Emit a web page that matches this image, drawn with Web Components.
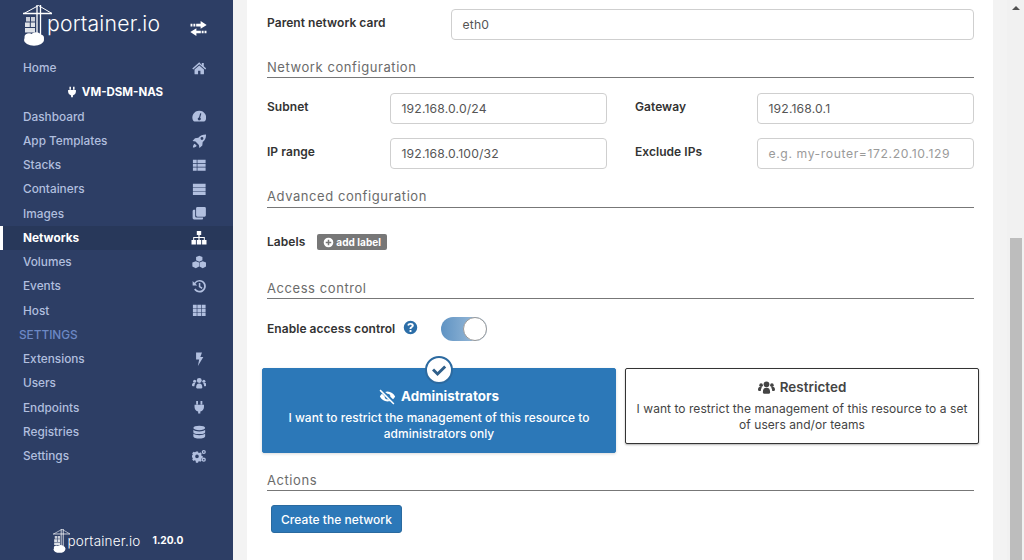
<!DOCTYPE html>
<html lang="en"><head><meta charset="utf-8"><title>Portainer</title>
<style>
html,body{margin:0;padding:0;height:560px;overflow:hidden;background:#f3f3f3;font-family:Inter,"Open Sans",sans-serif}
</style></head><body>
<app-shell>
  <side-bar slot="side"></side-bar>
  <form-panel slot="main"></form-panel>
</app-shell>
<script>
const I={
home:'<path d="M8 1.500.3 8.200l1.100 1.200L8 3.700l6.600 5.700 1.100-1.200-2.700-2.300V2.300h-2.200v2zM8 5 2.800 9.500V14a.6.6 0 0 0 .6.6h3.300v-3.800h2.600v3.800h3.300a.6.6 0 0 0 .6-.6V9.500z"/>',
plug:'<path d="M4.600 1h2v4h-2zM9.400 1h2v4h-2zM2.800 5.300h10.400V8a5.200 5.200 0 0 1-4 4.700V15H6.800v-2.300A5.200 5.200 0 0 1 2.800 8z"/>',
gauge:'<path fill-rule="evenodd" d="M8 1.800A7.500 7.500 0 0 0 1.400 13c.3.500.8.800 1.300.800h10.600c.5 0 1-.3 1.300-.8A7.500 7.500 0 0 0 8 1.800zM10.300 5 9 9.700a1.600 1.600 0 1 1-1.300-.3l1.300-4.700z"/>',
rocket:'<path d="M15.500.5c-3.700 0-6.300 1-8.500 3.700L3.300 4.600.6 7.800l3.300.6L7.600 12l.6 3.400 3.200-2.700.4-3.800C14.500 6.800 15.500 4.200 15.500.5zM11 3.400a1.600 1.600 0 1 1 0 3.200 1.600 1.600 0 0 1 0-3.200zM3 10.800c-1.200.5-2 2.300-2 4.200 1.900 0 3.700-.8 4.200-2z"/>',
list:'<path d="M1 2h4.200v3.400H1zM6 2h9v3.400H6zM1 6.300h4.200v3.400H1zM6 6.300h9v3.400H6zM1 10.600h4.200V14H1zM6 10.600h9V14H6z"/>',
server:'<path d="M1 1.800h14v3.700H1zM1 6.200h14v3.700H1zM1 10.600h14v3.700H1z"/>',
clone:'<path d="M6 1h7.800A1.500 1.500 0 0 1 15.300 2.500v7.800a1.500 1.500 0 0 1-1.500 1.500H6a1.500 1.500 0 0 1-1.500-1.500V2.500A1.500 1.500 0 0 1 6 1z"/><path d="M3.500 4.200v7.100a1.500 1.500 0 0 0 1.500 1.500h7.200v1a1 1 0 0 1-1 1H2.200A1.500 1.500 0 0 1 .7 13.300V5.700a1.500 1.500 0 0 1 1.500-1.500z"/>',
sitemap:'<path d="M5.800 1h4.400v4H8.600v2h5.200v3h1.700v4.500h-4.400V10h1.700V8H8.600v2h1.600v4.500H5.800V10h1.600V8H3.200v2h1.700v4.500H.5V10h1.700V7h5.200V5H5.800z"/>',
cubes:'<path d="M8 .7l3.500 1.500v3.700L8 7.500 4.500 5.900V2.200z"/><path d="M4.200 6.800l3.600 1.600v4.200l-3.600 1.900L.4 12.600V8.400z"/><path d="M11.800 6.800l3.800 1.600v4.200l-3.800 1.900-3.500-1.900V8.400z"/>',
history:'<path d="M8.300 1a7 7 0 1 1-6 10.600l1.600-1a5.100 5.100 0 1 0-.1-5.300l1.900 1.900H.7V2.200l1.800 1.800A7 7 0 0 1 8.300 1zM7.500 4.300h1.700v3.800l2.400 1.400-.8 1.400-3.300-2z"/>',
th:'<path d="M1 1.800h4.200v3.800H1zM5.900 1.800h4.200v3.800H5.900zM10.800 1.800H15v3.800h-4.200zM1 6.200h4.200v3.800H1zM5.900 6.200h4.200v3.800H5.900zM10.800 6.200H15v3.800h-4.200zM1 10.600h4.200v3.800H1zM5.900 10.600h4.200v3.800H5.900zM10.800 10.600H15v3.800h-4.200z"/>',
bolt:'<path d="M4.500.5H11L9.200 5.500H12.500L6.500 15.500l1.400-7.300H4.500z"/>',
users:'<circle cx="8" cy="5" r="2.700"/><circle cx="2.900" cy="5.800" r="1.700"/><circle cx="13.100" cy="5.800" r="1.700"/><path d="M4.600 12.800c0-3.200 1-4.500 3.400-4.500s3.400 1.300 3.400 4.500c0 .6-.5 1-1 1H5.600c-.5 0-1-.4-1-1zM0 10.200c0-1.600.8-2.800 2.200-2.800.7 0 1.100.2 1.500.5-.7.800-1 2-1.100 3.300H1c-.6 0-1-.4-1-1zM16 10.200c0-1.600-.8-2.800-2.200-2.800-.7 0-1.100.2-1.500.5.700.8 1 2 1.100 3.300H15c.6 0 1-.4 1-1z"/>',
db:'<ellipse cx="8" cy="3.200" rx="6.500" ry="2.500"/><path d="M1.500 5.200c1 1.300 3.800 1.900 6.500 1.900s5.500-.6 6.500-1.900v2.700C14.500 9.300 11 10 8 10S1.500 9.300 1.500 7.900zM1.500 9.400c1 1.300 3.800 1.900 6.500 1.900s5.500-.6 6.500-1.900v3C14.500 14.100 11 15 8 15s-6.500-.9-6.500-2.600z"/>',
cogs:'<path fill-rule="evenodd" d="M4.300 3.500h2.400l.3 1.300 1 .4 1.200-.7 1.600 1.600-.7 1.200.4 1 1.300.3v2.300l-1.300.3-.4 1 .7 1.200-1.600 1.600-1.200-.7-1 .4-.3 1.300H4.300L4 13.700 3 13.300l-1.200.7L.2 12.400l.7-1.200-.4-1-.5-.1V7.700l.5-.1.400-1-.7-1.200 1.600-1.600L3 4.500l1-.4zM5.500 7a2 2 0 1 0 0 4 2 2 0 0 0 0-4z" transform="translate(0 -.8)"/><path fill-rule="evenodd" d="M13 1a2.300 2.300 0 1 0 0 4.600A2.300 2.300 0 0 0 13 1zm0 1.400a.9.9 0 1 1 0 1.800.9.9 0 0 1 0-1.800zM13 9.500a2.300 2.300 0 1 0 0 4.600 2.300 2.300 0 0 0 0-4.600zm0 1.400a.9.9 0 1 1 0 1.800.9.9 0 0 1 0-1.800z"/>',
exchange:'<path d="M.5 3.500h1.800v2.500H.5zM3.200 3.500H5V6H3.200zM5.800 3.500H10V1l5.700 3.800L10 8.200V6H5.800zM15.500 10h-1.800v2.500h1.800zM12.800 10H11v2.500h1.800zM10.200 10H6V7.800L.3 11.200 6 15v-2.500h4.200z"/>',
eyeslash:'<path d="M1.500 1.500l13 13-1 1-13-13zM8 3.300c3.200 0 5.800 2 7.200 4.700-.5 1-1.200 1.900-2 2.700L10.700 8.200A2.800 2.800 0 0 0 7.800 5.300L5.800 3.700C6.500 3.500 7.200 3.300 8 3.300zM.8 8c.5-1 1.200-1.900 2-2.700l2.500 2.500a2.800 2.800 0 0 0 2.900 2.900l2 1.600c-.7.200-1.400.4-2.200.4-3.200 0-5.800-2-7.200-4.700z"/>',
check:'<path d="M1.800 8.500 3.600 6.700 6.700 9.800 12.600 3.900 14.400 5.700 6.700 13.400z"/>',
help:'<path fill-rule="evenodd" d="M8 .8a7.200 7.200 0 1 1 0 14.400A7.200 7.200 0 0 1 8 .8zM8.100 3.300c-1.800 0-3 .9-3.500 2.200l1.700.7c.3-.7.800-1.200 1.700-1.200.7 0 1.300.4 1.300 1 0 .5-.4.800-1 1.200-.8.500-1.300 1-1.300 2v.4h2v-.3c0-.4.300-.7.800-1 .9-.6 1.700-1.200 1.700-2.400 0-1.700-1.600-2.600-3.400-2.600zM7 10.700v2h2v-2z"/>',
plus:'<path fill-rule="evenodd" d="M8 1a7 7 0 1 1 0 14A7 7 0 0 1 8 1zM6.900 4v2.900H4v2.200h2.900V12h2.200V9.100H12V6.900H9.100V4z"/>'
};
const svg=(n,s,sty='')=>`<svg viewBox="0 0 16 16" width="${s}" height="${s}" fill="currentColor" style="display:block;${sty}" aria-hidden="true">${I[n]}</svg>`;
const LOGO=`<svg viewBox="0 0 30 41" width="100%" height="100%" aria-hidden="true" style="display:block"><g fill="none" stroke="#fff"><path stroke-width="1" d="M1 8.500 15.500.5 29 8.500"/><path stroke-width="1.300" d="M0 8.500H29M14 0V31M17.500 0V31"/></g><g fill="#fff"><path d="M3 12h4v4.500H3zM8 12h4v4.500H8z" opacity=".75"/><path d="M2 17.500h4.800v4.500H2zM7.800 17.500H12v4.500H7.800zM2 23h10v4.500H2z" opacity=".85"/><ellipse cx="11" cy="35" rx="10" ry="5.800"/><ellipse cx="6" cy="32" rx="4.500" ry="3.800"/><ellipse cx="13" cy="31" rx="5" ry="3.800"/><ellipse cx="17" cy="33" rx="4" ry="3.500"/></g></svg>`;

class AppShell extends HTMLElement{constructor(){super();this.attachShadow({mode:'open'}).innerHTML=`<style>
:host{display:flex;width:1024px;height:560px;overflow:hidden}
.main{flex:1;display:flex;min-width:0;padding-left:14px;background:#f3f3f3}
.page{flex:none;width:746px;height:560px;background:#fff;overflow:hidden}
.gut{flex:none;width:14px;background:#f3f3f3}
.track{flex:none;width:17px;background:#f1f1f1;display:flex;flex-direction:column;align-items:center;padding-top:6px;box-sizing:border-box}
.arrow{width:0;height:0;border-left:4px solid transparent;border-right:4px solid transparent;border-bottom:4px solid #505050}
.thumb{width:12px;height:322px;background:#bdbdbd;margin-top:228px;flex:none}
</style><slot name="side"></slot><div class="main"><div class="page"><slot name="main"></slot></div><div class="gut"></div><div class="track"><div class="arrow"></div><div class="thumb"></div></div></div>`}}
customElements.define('app-shell',AppShell);

class PLogo extends HTMLElement{constructor(){super();const h=+this.getAttribute('h')||41,w=h*30/41,f=this.getAttribute('f')||21.2;this.attachShadow({mode:'open'}).innerHTML=`<style>
:host{display:inline-flex;align-items:center;color:#fff}
.m{flex:none;width:${w}px;height:${h}px}
.t{font:300 ${f}px/1 Inter,sans-serif;margin-left:${this.getAttribute('gap')||-6}px;margin-top:${this.getAttribute('up')||-3}px;letter-spacing:.2px}
</style><div class="m">${LOGO}</div><span class="t">portainer.io</span>`}}
customElements.define('p-logo',PLogo);

class SideItem extends HTMLElement{constructor(){super();const a=this.hasAttribute('active');this.attachShadow({mode:'open'}).innerHTML=`<style>
:host{display:flex;align-items:center;justify-content:space-between;height:24.25px;padding:0 26px 0 23px;box-sizing:border-box;color:#b1bfdf;font:500 11.8px Inter,sans-serif;position:relative}
:host([active]){background:#28385a;color:#fff;font-weight:700}
:host([active])::before{content:"";position:absolute;left:0;top:0;bottom:0;width:3px;background:#fff}
.i{width:16px;height:14px;display:flex;justify-content:center;align-items:center}
</style><span><slot></slot></span><span class="i">${svg(this.getAttribute('icon'),a?16:14.5)}</span>`}}
customElements.define('side-item',SideItem);

class SideBar extends HTMLElement{constructor(){super();const items=[['Dashboard','gauge'],['App Templates','rocket'],['Stacks','list'],['Containers','server'],['Images','clone'],['Networks','sitemap',1],['Volumes','cubes'],['Events','history'],['Host','th']];
const s2=[['Extensions','bolt'],['Users','users'],['Endpoints','plug'],['Registries','db'],['Settings','cogs']];
const r=a=>a.map(x=>`<side-item icon="${x[1]}"${x[2]?' active':''}>${x[0]}</side-item>`).join('');
this.attachShadow({mode:'open'}).innerHTML=`<style>
:host{display:flex;flex-direction:column;flex:none;width:233px;height:560px;background:#2d3e65;box-sizing:border-box}
.top{height:56px;flex:none;display:flex;align-items:flex-start;justify-content:space-between;padding:5px 26px 0 23px;box-sizing:border-box;color:#fff}
.ex{margin-top:15px}
.ep{height:24.25px;display:flex;align-items:center;justify-content:center;gap:4px;color:#fff;font:700 11.5px Inter,sans-serif;padding-right:4px}
.h{height:24.25px;display:flex;align-items:center;padding-left:19px;color:#6c88c4;font:500 11.8px Inter,sans-serif}
.foot{margin-top:auto;height:31px;flex:none;display:flex;align-items:flex-start;padding-left:53px;gap:12px;color:#fff;box-sizing:border-box}
.v{font:700 10.200px Inter,sans-serif;margin-top:5px}
</style><div class="top"><p-logo></p-logo><span class="ex">${svg('exchange',17)}</span></div>
<side-item icon="home">Home</side-item><div class="ep">${svg('plug',12)}<span>VM-DSM-NAS</span></div>
${r(items)}<div class="h">SETTINGS</div>${r(s2)}
<div class="foot"><p-logo h="24" f="13.500" gap="-3" up="2"></p-logo><span class="v">1.20.0</span></div>`}}
customElements.define('side-bar',SideBar);

class SecTitle extends HTMLElement{constructor(){super();this.attachShadow({mode:'open'}).innerHTML=`<style>
:host{display:block;margin:0 19px 0 20px;border-bottom:1px solid #777;color:#6b6b6b;font:400 13px/17px Inter,sans-serif;padding-bottom:1px;letter-spacing:.57px}
</style><slot></slot>`}}
customElements.define('sec-title',SecTitle);

class TextField extends HTMLElement{constructor(){super();const v=this.getAttribute('value'),p=this.getAttribute('placeholder');this.attachShadow({mode:'open'}).innerHTML=`<style>
:host{display:flex;align-items:center;box-sizing:border-box;height:31px;border:1px solid #cfcfcf;border-radius:4px;padding:0 10.500px;color:#555;font:400 12.200px Inter,sans-serif;background:#fff;letter-spacing:.15px}
.p{color:#9a9a9a;letter-spacing:.6px}
</style><span class="${v?'':'p'}">${v||p}</span>`}}
customElements.define('text-field',TextField);

class AcBox extends HTMLElement{constructor(){super();const sel=this.hasAttribute('selected');this.attachShadow({mode:'open'}).innerHTML=`<style>
:host{display:flex;flex:none;flex-direction:column;align-items:center;box-sizing:border-box;width:354px;height:76px;border-radius:2px;text-align:center;position:relative;padding:8px 10px 0;font:400 12px/15.500px Inter,sans-serif;color:#444;background:#fff;border:1px solid #333;box-shadow:0 1px 2px rgba(0,0,0,.3)}
:host([selected]){height:85px;padding-top:17px;background:#2c78b8;border-color:#2c78b8;color:#fff;box-shadow:0 1px 3px rgba(0,0,0,.15);font-weight:500;font-size:11.950px}
.t{display:flex;align-items:center;gap:5px;font:600 13.400px/20px Inter,sans-serif;color:inherit;margin-bottom:4px}
:host([selected]) .t{font-weight:700}
.c{position:absolute;left:50%;top:-13px;margin-left:-14px;width:28px;height:28px;box-sizing:border-box;border-radius:50%;background:#fff;border:2px solid #2c6aa0;color:#2f5f8a;display:flex;align-items:center;justify-content:center}
</style>${sel?`<div class="c">${svg('check',18)}</div>`:''}<div class="t">${svg(this.getAttribute('icon'),17)}<span>${this.getAttribute('title')}</span></div><div><slot></slot></div>`}}
customElements.define('ac-box',AcBox);

class FormPanel extends HTMLElement{constructor(){super();this.attachShadow({mode:'open'}).innerHTML=`<style>
:host{display:block;font:600 12px Inter,sans-serif;color:#333;padding-top:9px;letter-spacing:.05px}
.r{display:flex;align-items:center;margin:0 19px 0 20px}
.parent b{font:inherit;width:184px;flex:none;padding-bottom:5px}
.parent text-field{flex:1}
.g{display:grid;grid-template-columns:123px 217px 1fr 217px;align-items:center;row-gap:14px;margin:15px 19px 0 20px}
.g>span{padding-bottom:5px}
.g .l2{padding-left:28px}
.lab{margin-top:28px;height:14px}
.lab>span:first-child{padding-bottom:2px}
.pill{display:inline-flex;align-items:center;gap:2px;margin-left:12px;height:16px;padding:0 6px;background:#777;color:#fff;border-radius:2px;font:700 10px Inter,sans-serif}
.tog{display:inline-block;width:46px;height:24px;border-radius:12px;background:linear-gradient(90deg,#5f93c3,#a8c4de);position:relative;margin-left:23px;margin-top:2px}
.tog::after{content:"";position:absolute;right:0;top:0;width:24px;height:24px;box-sizing:border-box;border-radius:50%;background:#fff;border:1px solid #999}
.help{color:#2c6ea8;margin-left:8px;display:block;margin-bottom:2px}
.boxes{display:flex;align-items:flex-start;gap:9px;margin:27px 0 0 15px}
.btn{display:inline-flex;align-items:center;justify-content:center;width:131px;height:28px;margin:14px 0 0 24px;background:#2c78b8;border:1px solid #2a6a9f;box-sizing:border-box;border-radius:3px;color:#fff;font:500 12px Inter,sans-serif}
</style>
<div class="r parent"><b>Parent network card</b><text-field value="eth0"></text-field></div>
<sec-title style="margin-top:19px">Network configuration</sec-title>
<div class="g"><span>Subnet</span><text-field value="192.168.0.0/24"></text-field><span class="l2">Gateway</span><text-field value="192.168.0.1"></text-field>
<span>IP range</span><text-field value="192.168.0.100/32"></text-field><span class="l2">Exclude IPs</span><text-field placeholder="e.g. my-router=172.20.10.129"></text-field></div>
<sec-title style="margin-top:19px;padding-bottom:2px">Advanced configuration</sec-title>
<div class="r lab" style="margin-top:27px"><span>Labels</span><span class="pill">${svg('plus',11)}add label</span></div>
<sec-title style="margin-top:31px">Access control</sec-title>
<div class="r" style="margin-top:16px"><span>Enable access control</span><span class="help">${svg('help',15)}</span><span class="tog"></span></div>
<div class="boxes"><ac-box selected icon="eyeslash" title="Administrators">I want to restrict the management of this resource to administrators only</ac-box><ac-box icon="users" title="Restricted">I want to restrict the management of this resource to a set of users and/or teams</ac-box></div>
<sec-title style="margin-top:19px">Actions</sec-title>
<div class="btn">Create the network</div>`}}
customElements.define('form-panel',FormPanel);
</script>
</body></html>
